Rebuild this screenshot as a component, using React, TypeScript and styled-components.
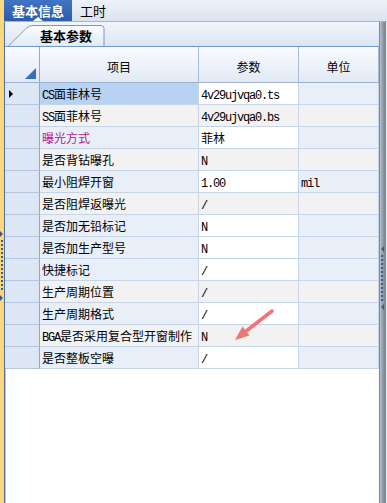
import { Fragment } from "react";
import styled, { createGlobalStyle } from "styled-components";

const GlobalStyle = createGlobalStyle`
  html, body {
    margin: 0;
    padding: 0;
    background: #fff;
  }
  body {
    font-family: "Noto Sans CJK SC", "Noto Sans", sans-serif;
    font-size: 12px;
    color: #000;
  }
`;

const Frame = styled.div`
  position: relative;
  display: flex;
  width: 387px;
  height: 503px;
  overflow: hidden;
  background: #fff;
`;

const Splitter = styled.div<{ side: "left" | "right" }>`
  position: relative;
  flex-shrink: 0;
  width: ${(p) => (p.side === "left" ? "4px" : "6px")};
  background: ${(p) =>
    p.side === "left"
      ? "#fcd77c"
      : "linear-gradient(to right, #b9c2cd, #8e99a8 50%, #737f90)"};
  border-left: ${(p) => (p.side === "right" ? "1px solid #6f8cb8" : "none")};
  border-right: ${(p) => (p.side === "right" ? "1px solid #e9edf2" : "none")};
`;

const Handle = styled.div<{ top: number; dir: "left" | "right" }>`
  position: absolute;
  top: ${(p) => p.top}px;
  left: ${(p) => (p.dir === "right" ? "0" : "1px")};
  width: 0;
  height: 0;
  border-top: 3px solid transparent;
  border-bottom: 3px solid transparent;
  ${(p) =>
    p.dir === "right"
      ? "border-left: 3px solid #3c5a8c;"
      : "border-right: 3px solid #3c5a8c;"}
`;

const Dots = styled.div<{ top: number; height: number }>`
  position: absolute;
  top: ${(p) => p.top}px;
  left: 1px;
  width: 2px;
  height: ${(p) => p.height}px;
  background: repeating-linear-gradient(
    to bottom,
    #3c5a8c 0,
    #3c5a8c 2px,
    transparent 2px,
    transparent 4px
  );
`;

const Main = styled.div`
  flex: 1;
  min-width: 0;
  display: flex;
  flex-direction: column;
`;

const TopBar = styled.div`
  display: flex;
  height: 22px;
  box-sizing: border-box;
  background: linear-gradient(#eef3f9, #d9e3f0);
  border-bottom: 1px solid #a3b4cc;
`;

const TopTab = styled.div<{ active?: boolean }>`
  position: relative;
  display: flex;
  align-items: center;
  justify-content: center;
  width: ${(p) => (p.active ? "68px" : "auto")};
  margin-left: ${(p) => (p.active ? "0" : "8px")};
  font-size: 13px;
  font-weight: ${(p) => (p.active ? "bold" : "normal")};
  color: ${(p) => (p.active ? "#fff" : "#000")};
  background: ${(p) =>
    p.active ? "linear-gradient(#4174c4, #2d5cab)" : "transparent"};

  &::after {
    content: "";
    display: ${(p) => (p.active ? "block" : "none")};
    position: absolute;
    bottom: 0;
    left: 29px;
    width: 0;
    height: 0;
    border-left: 5px solid transparent;
    border-right: 5px solid transparent;
    border-bottom: 4px solid #fff;
  }
`;

const Body = styled.div`
  flex: 1;
  min-height: 0;
  display: flex;
`;

const Content = styled.div`
  flex: 1;
  min-width: 0;
  display: flex;
  flex-direction: column;
  border-left: 1px solid #4f6f9f;
  box-shadow: inset 1px 0 #b3c7e3;
`;

const SubTabStrip = styled.div`
  display: flex;
  align-items: flex-end;
  height: 24px;
  box-sizing: border-box;
  padding-left: 3px;
  background: linear-gradient(#f1f5fb, #dbe5f3);
`;

const SubTab = styled.div`
  position: relative;
  display: flex;
  align-items: center;
  height: 21px;
  padding: 0 12px 0 32px;
  font-size: 13px;
  font-weight: bold;

  svg {
    position: absolute;
    left: 0;
    top: 0;
  }
  span {
    position: relative;
  }
`;

const Grid = styled.div`
  display: grid;
  grid-template-columns: 35px 159px 100px 80px;
  border-top: 1px solid #7598cc;
`;

const HeadCell = styled.div<{ corner?: boolean }>`
  position: relative;
  height: 36px;
  box-sizing: border-box;
  display: flex;
  align-items: center;
  justify-content: center;
  padding-top: 3px;
  background: linear-gradient(#f9fbfe, #e2eaf5);
  border-right: 1px solid ${(p) => (p.corner ? "#93aacb" : "#a9bbd5")};
  border-bottom: 1px solid #9cb1d0;
  font-size: 12px;

  svg {
    position: absolute;
    right: 3px;
    bottom: 3px;
  }
`;

const RowHead = styled.div`
  height: 22px;
  box-sizing: border-box;
  display: flex;
  align-items: center;
  padding-left: 4px;
  background: #dce6f4;
  border-right: 1px solid #93aacb;
  border-bottom: 1px solid #b4c5de;
`;

const Pointer = styled.div`
  width: 0;
  height: 0;
  border-top: 4px solid transparent;
  border-bottom: 4px solid transparent;
  border-left: 4px solid #000;
`;

const Cell = styled.div<{ bg: string; color?: string }>`
  height: 22px;
  box-sizing: border-box;
  padding-left: 2px;
  white-space: nowrap;
  overflow: hidden;
  background: ${(p) => p.bg};
  color: ${(p) => p.color || "#000"};
  border-right: 1px solid #c6d4e8;
  border-bottom: 1px solid #c6d4e8;
  font-size: 12px;
  line-height: 21px;
`;

const Mono = styled.span`
  font-family: "Liberation Mono", "DejaVu Sans Mono", monospace;
  font-size: 12px;
  letter-spacing: -1.2px;
`;

const Arrow = styled.svg`
  position: absolute;
  left: 228px;
  top: 304px;
`;

type Row = {
  item: string;
  value: string;
  unit?: string;
  alt?: boolean;
  selected?: boolean;
  color?: string;
};

const rows: Row[] = [
  { item: "CS面菲林号", value: "4v29ujvqa0.ts", selected: true },
  { item: "SS面菲林号", value: "4v29ujvqa0.bs", alt: true },
  { item: "曝光方式", value: "菲林", color: "#b8208c" },
  { item: "是否背钻曝孔", value: "N", alt: true },
  { item: "最小阻焊开窗", value: "1.00", unit: "mil" },
  { item: "是否阻焊返曝光", value: "/", alt: true },
  { item: "是否加无铅标记", value: "N" },
  { item: "是否加生产型号", value: "N" },
  { item: "快捷标记", value: "/" },
  { item: "生产周期位置", value: "/", alt: true },
  { item: "生产周期格式", value: "/" },
  { item: "BGA是否采用复合型开窗制作", value: "N", alt: true },
  { item: "是否整板空曝", value: "/" },
];

// ascii runs get the narrow mono face, like the old bitmap font
function Text({ value }: { value: string }) {
  const parts = value.split(/([A-Za-z0-9./]+)/).filter((s) => s !== "");
  return (
    <span>
      {parts.map((p, i) =>
        /^[A-Za-z0-9./]+$/.test(p) ? <Mono key={i}>{p}</Mono> : <Fragment key={i}>{p}</Fragment>
      )}
    </span>
  );
}

export default function App() {
  return (
    <>
      <GlobalStyle />
      <Frame>
        <Splitter side="left">
          <Handle dir="right" top={231} />
          <Dots top={240} height={52} />
          <Handle dir="right" top={295} />
        </Splitter>
        <Main>
          <TopBar>
            <TopTab active>基本信息</TopTab>
            <TopTab>工时</TopTab>
          </TopBar>
          <Body>
            <Content>
              <SubTabStrip>
                <SubTab>
                  <svg width="97" height="21" viewBox="0 0 97 21">
                    <defs>
                      <linearGradient id="tabFill" x1="0" y1="0" x2="0" y2="1">
                        <stop offset="0" stopColor="#fbfdff" />
                        <stop offset="1" stopColor="#e1eaf6" />
                      </linearGradient>
                    </defs>
                    <path
                      d="M0.5 21 L18 3.5 Q21 0.5 25 0.5 L93 0.5 Q96 0.5 96 3.5 L96 21"
                      fill="url(#tabFill)"
                      stroke="#7d98c0"
                      strokeWidth="1"
                    />
                  </svg>
                  <span>基本参数</span>
                </SubTab>
              </SubTabStrip>
              <Grid>
                <HeadCell corner>
                  <svg width="11" height="11" viewBox="0 0 11 11">
                    <polygon points="11,0 11,11 0,11" fill="#3a6ec0" />
                  </svg>
                </HeadCell>
                <HeadCell>项目</HeadCell>
                <HeadCell>参数</HeadCell>
                <HeadCell>单位</HeadCell>
                {rows.map((r, i) => {
                  const side = r.alt ? "#f2f2f2" : "#e8eff9";
                  return (
                    <Fragment key={i}>
                      <RowHead>{r.selected && <Pointer />}</RowHead>
                      <Cell bg={r.selected ? "#b7d2f3" : side} color={r.color}>
                        <Text value={r.item} />
                      </Cell>
                      <Cell bg={r.alt ? "#f2f2f2" : "#fff"}>
                        <Text value={r.value} />
                      </Cell>
                      <Cell bg={side}>{r.unit && <Text value={r.unit} />}</Cell>
                    </Fragment>
                  );
                })}
              </Grid>
            </Content>
            <Splitter side="right">
              <Handle dir="left" top={224} />
              <Dots top={233} height={48} />
              <Handle dir="left" top={282} />
            </Splitter>
          </Body>
        </Main>
        <Arrow width="50" height="42" viewBox="0 0 50 42">
          <line x1="44" y1="7" x2="17" y2="28" stroke="#ef7676" strokeWidth="3.5" strokeLinecap="round" />
          <polygon points="7,36 21.5,31.5 14.5,22.5" fill="#ef7676" />
        </Arrow>
      </Frame>
    </>
  );
}
